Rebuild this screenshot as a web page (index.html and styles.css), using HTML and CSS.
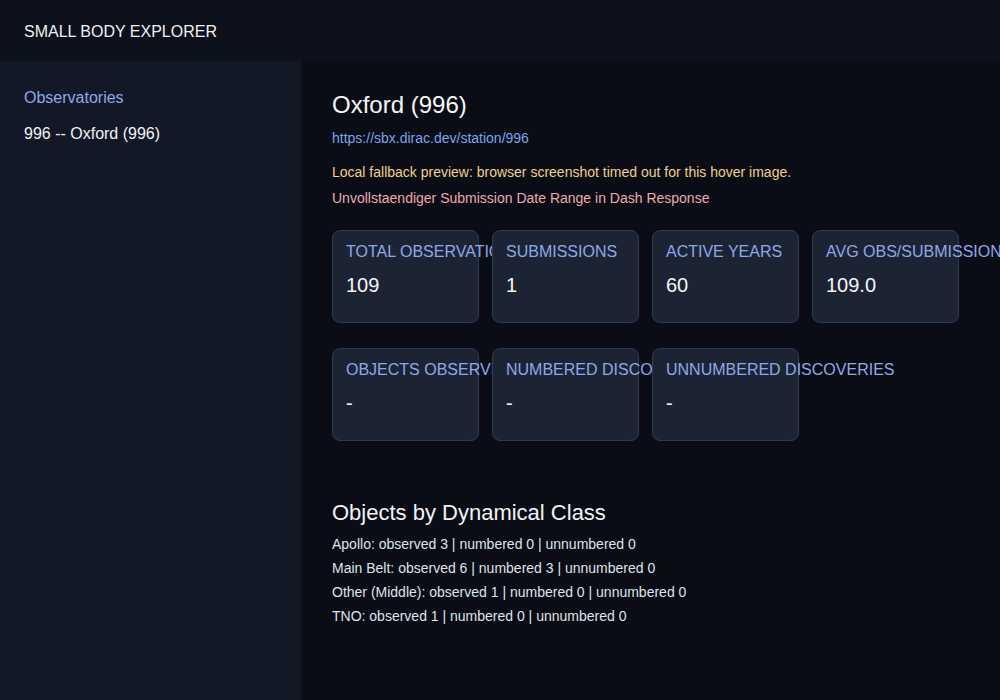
FILE: index.html
```html
<!DOCTYPE html>
<html>
<head>
<meta charset="utf-8">
<link rel="stylesheet" href="styles.css">
</head>
<body>
<header class="topbar">SMALL BODY EXPLORER</header>
<div class="layout">
  <aside class="sidebar">
    <div class="side-title">Observatories</div>
    <div class="side-item">996 -- Oxford (996)</div>
  </aside>
  <main class="main">
    <h1 class="title">Oxford (996)</h1>
    <a class="link" href="#">https://sbx.dirac.dev/station/996</a>
    <p class="note warn">Local fallback preview: browser screenshot timed out for this hover image.</p>
    <p class="note err">Unvollstaendiger Submission Date Range in Dash Response</p>
    <div class="cards">
      <div class="card"><div class="label">TOTAL OBSERVATIONS</div><div class="value">109</div></div>
      <div class="card"><div class="label">SUBMISSIONS</div><div class="value">1</div></div>
      <div class="card"><div class="label">ACTIVE YEARS</div><div class="value">60</div></div>
      <div class="card"><div class="label">AVG OBS/SUBMISSION</div><div class="value">109.0</div></div>
    </div>
    <div class="cards second">
      <div class="card"><div class="label">OBJECTS OBSERVED</div><div class="value">-</div></div>
      <div class="card"><div class="label">NUMBERED DISCOVERIES</div><div class="value">-</div></div>
      <div class="card"><div class="label">UNNUMBERED DISCOVERIES</div><div class="value">-</div></div>
    </div>
    <h2 class="section">Objects by Dynamical Class</h2>
    <ul class="classes">
      <li>Apollo: observed 3 | numbered 0 | unnumbered 0</li>
      <li>Main Belt: observed 6 | numbered 3 | unnumbered 0</li>
      <li>Other (Middle): observed 1 | numbered 0 | unnumbered 0</li>
      <li>TNO: observed 1 | numbered 0 | unnumbered 0</li>
    </ul>
  </main>
</div>
</body>
</html>
```

FILE: styles.css
```css
* { box-sizing: border-box; }
html, body {
  margin: 0;
  padding: 0;
  height: 100%;
  background: #0a0d15;
  font-family: "Liberation Sans", Arial, sans-serif;
  color: #e5e7eb;
  overflow: hidden;
}
.topbar {
  height: 61px;
  background: #0d111b;
  padding: 2px 24px 0;
  display: flex;
  align-items: center;
  font-size: 16px;
  color: #eef0f4;
}
.layout {
  display: flex;
  height: calc(100% - 61px);
}
.sidebar {
  width: 301px;
  flex: 0 0 301px;
  background: #121826;
  padding: 25px 24px;
  display: flex;
  flex-direction: column;
  gap: 12px;
}
.side-title {
  font-size: 16px;
  line-height: 24px;
  color: #8fa9ea;
}
.side-item {
  font-size: 16px;
  line-height: 24px;
  color: #f1f3f6;
}
.main {
  flex: 1;
  min-width: 0;
  padding: 30px 31px;
  background: #0a0d15;
}
.title {
  margin: 0;
  font-size: 24px;
  line-height: 28px;
  font-weight: normal;
  color: #f5f6f8;
}
.link {
  display: block;
  margin-top: 9px;
  font-size: 14px;
  line-height: 20px;
  color: #7ea2ee;
  text-decoration: none;
}
.note {
  margin: 14px 0 0;
  font-size: 14px;
  line-height: 20px;
}
.note.err { margin-top: 6px; }
.warn { color: #f1cf8e; }
.err { color: #f0a9b0; }
.cards {
  display: flex;
  gap: 13px;
  margin-top: 22px;
}
.cards.second { margin-top: 25px; }
.card {
  width: 147px;
  flex: 0 0 147px;
  height: 93px;
  background: #1c2434;
  border: 1px solid #2a3c59;
  border-radius: 8px;
  padding: 11px 13px 10px;
}
.label {
  font-size: 16px;
  line-height: 20px;
  color: #8ea8e8;
  white-space: nowrap;
}
.value {
  margin-top: 11px;
  font-size: 20px;
  line-height: 24px;
  color: #f5f6f8;
}
.section {
  margin: 59px 0 0;
  font-size: 22px;
  line-height: 26px;
  font-weight: normal;
  color: #f1f3f6;
}
.classes {
  list-style: none;
  margin: 6px 0 0;
  padding: 0;
  font-size: 14px;
  line-height: 24px;
  color: #dfe3ea;
}
```
